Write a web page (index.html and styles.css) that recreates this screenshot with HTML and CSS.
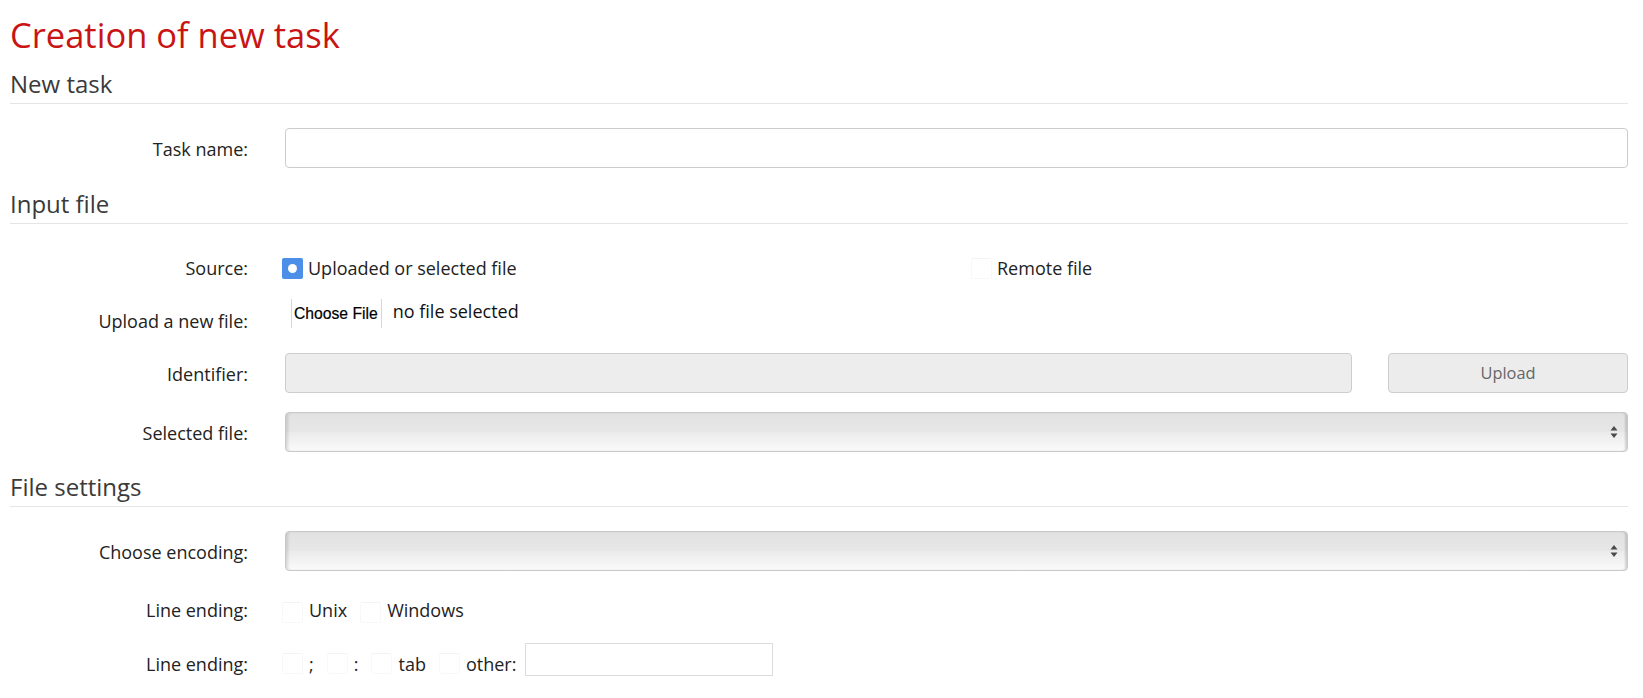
FILE: index.html
```html
<!DOCTYPE html>
<html lang="en">
<head>
<meta charset="utf-8">
<title>Creation of new task</title>
<link rel="stylesheet" href="styles.css">
</head>
<body>
<h1 class="title">Creation of new task</h1>

<h2 class="section">New task</h2>
<div class="row row-task">
  <div class="lbl lbl-field">Task name:</div>
  <div class="ctl"><div class="text-input"></div></div>
</div>

<h2 class="section section-input">Input file</h2>
<div class="row row-source">
  <div class="lbl">Source:</div>
  <div class="ctl source-options">
    <div class="opt"><span class="radio checked"></span><span>Uploaded or selected file</span></div>
    <div class="opt"><span class="radio"></span><span>Remote file</span></div>
  </div>
</div>
<div class="row row-upload">
  <div class="lbl lbl-upload">Upload a new file:</div>
  <div class="ctl file-ctl">
    <span class="file-btn">Choose File</span>
    <span class="file-name">no file selected</span>
  </div>
</div>
<div class="row row-ident">
  <div class="lbl lbl-field">Identifier:</div>
  <div class="ctl ident-ctl">
    <div class="text-input disabled"></div>
    <div class="btn">Upload</div>
  </div>
</div>
<div class="row row-selected">
  <div class="lbl lbl-field">Selected file:</div>
  <div class="ctl">
    <div class="select">
      <svg class="arrows" width="8" height="14" viewBox="0 0 8 14"><path d="M4 1 L7.5 5.5 L0.5 5.5 Z M4 13 L7.5 8.5 L0.5 8.5 Z" fill="#4a4a4a"/></svg>
    </div>
  </div>
</div>

<h2 class="section section-file">File settings</h2>
<div class="row row-encoding">
  <div class="lbl lbl-field">Choose encoding:</div>
  <div class="ctl">
    <div class="select">
      <svg class="arrows" width="8" height="14" viewBox="0 0 8 14"><path d="M4 1 L7.5 5.5 L0.5 5.5 Z M4 13 L7.5 8.5 L0.5 8.5 Z" fill="#4a4a4a"/></svg>
    </div>
  </div>
</div>
<div class="row row-line1">
  <div class="lbl">Line ending:</div>
  <div class="ctl inline-options">
    <div class="opt"><span class="radio"></span><span>Unix</span></div>
    <div class="opt"><span class="radio"></span><span>Windows</span></div>
  </div>
</div>
<div class="row row-line2">
  <div class="lbl lbl-line2">Line ending:</div>
  <div class="ctl inline-options options-low">
    <div class="opt"><span class="radio"></span><span>;</span></div>
    <div class="opt"><span class="radio"></span><span>:</span></div>
    <div class="opt"><span class="radio"></span><span>tab</span></div>
    <div class="opt"><span class="radio"></span><span>other:</span><span class="other-input"></span></div>
  </div>
</div>
</body>
</html>
```

FILE: styles.css
```css
* {
  box-sizing: border-box;
}

body {
  margin: 0;
  padding: 0 15px 0 10px;
  font-family: "Open Sans", "DejaVu Sans", sans-serif;
  color: #222;
  background: #fff;
}

.title {
  margin: 15px 0 0;
  font-size: 34.5px;
  line-height: 40px;
  font-weight: 400;
  color: #c91414;
}

.section {
  margin: 14px 0 0;
  padding-bottom: 4px;
  font-size: 24px;
  line-height: 30px;
  font-weight: 400;
  color: #3a3a3a;
  border-bottom: 1px solid #e5e5e5;
}

.section-input {
  margin-top: 21px;
}

.section-file {
  margin-top: 20px;
}

.row {
  display: grid;
  grid-template-columns: 238px 1fr;
  column-gap: 37px;
  font-size: 18px;
  line-height: 24px;
}

.lbl {
  text-align: right;
  color: #222;
}

.lbl-field {
  padding-top: 2px;
  line-height: 38px;
}

.row-task {
  margin-top: 24px;
}

.row-source {
  margin-top: 32px;
}

.row-upload {
  margin-top: 19px;
}

.row-ident {
  margin-top: 20px;
}

.row-selected {
  margin-top: 19px;
}

.row-encoding {
  margin-top: 24px;
}

.row-line1 {
  margin-top: 27px;
}

.row-line2 {
  margin-top: 20px;
}

.text-input {
  height: 40px;
  border: 1px solid #cccccc;
  border-radius: 4px;
  background: #fff;
}

.text-input.disabled {
  background: #ededed;
  border-color: #cdcdcd;
}

/* Source options */
.source-options {
  display: grid;
  grid-template-columns: 1fr 1fr;
  column-gap: 32px;
  margin-left: -3px;
}

.opt {
  display: flex;
  align-items: center;
  gap: 5px;
}

.radio {
  flex: none;
  width: 21px;
  height: 21px;
  border: 1px solid #f8f8f8;
  border-top-color: #f3f3f3;
  border-radius: 2px;
  background: #fff;
}

.radio.checked {
  position: relative;
  border: none;
  background: #4b8fe9;
}

.radio.checked::after {
  content: "";
  position: absolute;
  left: 6px;
  top: 6px;
  width: 9px;
  height: 9px;
  border-radius: 50%;
  background: #fff;
}

/* File input */
.lbl-upload {
  padding-top: 10px;
}

.file-ctl {
  display: flex;
  align-items: flex-start;
  gap: 11px;
  margin-left: 6px;
}

.file-btn {
  height: 29px;
  padding: 0 3px 0 2px;
  font-family: "Liberation Sans", Arial, sans-serif;
  font-size: 15.7px;
  line-height: 29px;
  color: #000;
  border-left: 1px solid #d6d6d6;
  border-right: 1px solid #d6d6d6;
  -webkit-text-stroke: 0.2px #000;
}

.file-name {
  line-height: 24px;
  color: #111;
}

/* Identifier + button */
.ident-ctl {
  display: grid;
  grid-template-columns: 1fr 240px;
  column-gap: 36px;
}

.btn {
  height: 40px;
  border: 1px solid #cdcdcd;
  border-radius: 4px;
  background: #ececec;
  color: #666;
  font-size: 16.4px;
  line-height: 38px;
  text-align: center;
}

/* Selects */
.select {
  height: 40px;
  display: flex;
  align-items: center;
  justify-content: flex-end;
  padding-right: 9px;
  border: 1px solid #c9c9c9;
  border-radius: 4px;
  background: linear-gradient(#e2e2e2, #e7e7e7 50%, #ebebeb 50%, #fafafa);
  box-shadow: inset 3px 0 3px -1px rgba(0, 0, 0, 0.12), inset -3px 0 2px -1px rgba(0, 0, 0, 0.14);
}

.arrows {
  display: block;
}

/* Line ending options */
.inline-options {
  display: flex;
  align-items: flex-start;
  gap: 13px;
  margin-left: -3px;
}

.inline-options .opt {
  align-items: flex-start;
  gap: 6px;
}

.row-line1 .radio {
  margin-top: 4px;
}

.lbl-line2 {
  margin-top: 9px;
}

.options-low .opt > span:not(.radio):not(.other-input) {
  margin-top: 9px;
}

.options-low .radio {
  margin-top: 10px;
}

.other-input {
  width: 248px;
  height: 33px;
  margin-left: 3px;
  border: 1px solid #dcdcdc;
  background: #fff;
}
```
